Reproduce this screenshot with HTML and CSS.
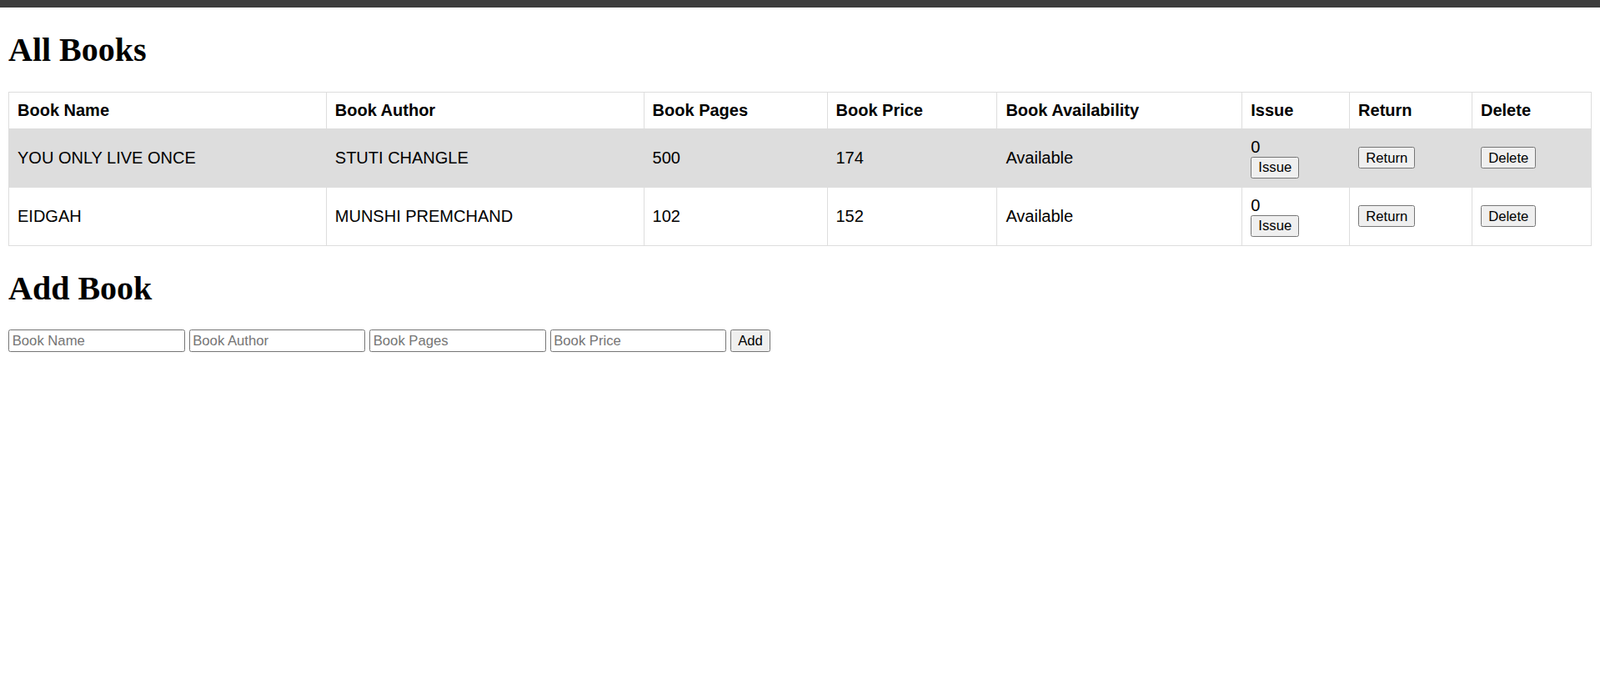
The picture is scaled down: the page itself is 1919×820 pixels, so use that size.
FILE: index.html
```html
<!DOCTYPE html>
<html>
<head>
<meta charset="utf-8">
<title>Library</title>
<link rel="stylesheet" href="styles.css">
</head>
<body>
<div class="topbar"></div>
<div class="page">
  <h1>All Books</h1>
  <table class="books">
    <colgroup>
      <col class="c-name">
      <col class="c-author">
      <col class="c-pages">
      <col class="c-price">
      <col class="c-avail">
      <col class="c-issue">
      <col class="c-return">
      <col class="c-delete">
    </colgroup>
    <tr>
      <th>Book Name</th>
      <th>Book Author</th>
      <th>Book Pages</th>
      <th>Book Price</th>
      <th>Book Availability</th>
      <th>Issue</th>
      <th>Return</th>
      <th>Delete</th>
    </tr>
    <tr>
      <td>YOU ONLY LIVE ONCE</td>
      <td>STUTI CHANGLE</td>
      <td>500</td>
      <td>174</td>
      <td>Available</td>
      <td><div>0</div><button class="btn">Issue</button></td>
      <td><button class="btn">Return</button></td>
      <td><button class="btn">Delete</button></td>
    </tr>
    <tr>
      <td>EIDGAH</td>
      <td>MUNSHI PREMCHAND</td>
      <td>102</td>
      <td>152</td>
      <td>Available</td>
      <td><div>0</div><button class="btn">Issue</button></td>
      <td><button class="btn">Return</button></td>
      <td><button class="btn">Delete</button></td>
    </tr>
  </table>
  <h1>Add Book</h1>
  <form class="add-form">
    <input class="field" type="text" placeholder="Book Name">
    <input class="field" type="text" placeholder="Book Author">
    <input class="field" type="text" placeholder="Book Pages">
    <input class="field" type="text" placeholder="Book Price">
    <button class="btn" type="button">Add</button>
  </form>
</div>
</body>
</html>
```

FILE: styles.css
```css
html, body {
  margin: 0;
  padding: 0;
  background: #ffffff;
}

.topbar {
  height: 9px;
  background: #3c3c3c;
}

.page {
  zoom: 1.25;
  margin: 8px;
  font-family: "Liberation Serif", "Times New Roman", serif;
}

h1 {
  font-size: 32px;
  font-weight: bold;
  margin: 21.44px 0;
}

.books {
  border-collapse: collapse;
  width: 100%;
  table-layout: fixed;
  font-family: "Liberation Sans", Arial, sans-serif;
  font-size: 16px;
}

.c-name { width: 20.06%; }
.c-author { width: 20.06%; }
.c-pages { width: 11.585%; }
.c-price { width: 10.74%; }
.c-avail { width: 15.48%; }
.c-issue { width: 6.79%; }
.c-return { width: 7.74%; }
.c-delete { width: 7.53%; }

.books th,
.books td {
  border: 1px solid #dddddd;
  text-align: left;
  padding: 8px;
  color: #000;
}

.books tr:nth-child(even) {
  background-color: #dddddd;
}

.btn {
  font-family: "Liberation Sans", Arial, sans-serif;
  font-size: 13.333px;
  line-height: 15.3px;
  color: #000;
  background: #efefef;
  border: 1px solid #767676;
  border-radius: 2px;
  padding: 2px 6.5px;
  margin: 0;
}

.add-form {
  margin: 0;
}

.field {
  font-family: "Liberation Sans", Arial, sans-serif;
  font-size: 13.333px;
  line-height: 15.3px;
  width: 161.6px;
  padding: 2px 3px;
  border: 1px solid #767676;
  border-radius: 2px;
  margin: 0;
  box-sizing: content-box;
}

.field::placeholder {
  color: #757575;
}
```
